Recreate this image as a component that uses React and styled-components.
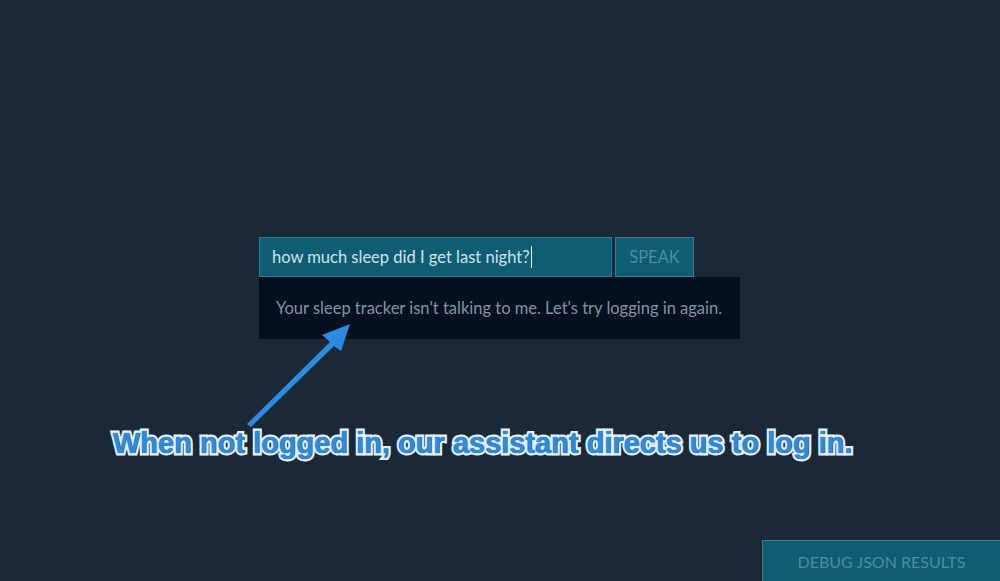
import React from "react";
import styled, { createGlobalStyle } from "styled-components";

const GlobalStyle = createGlobalStyle`
  html, body {
    margin: 0;
    padding: 0;
    background: #1b2838;
    height: 100%;
    overflow: hidden;
  }
  #root {
    height: 100%;
  }
`;

const App = () => {
  return (
    <Page>
      <GlobalStyle />
      <Assistant>
        <AskRow>
          <Question>
            how much sleep did I get last night?<Caret />
          </Question>
          <SpeakButton>SPEAK</SpeakButton>
        </AskRow>
        <Reply>Your sleep tracker isn't talking to me. Let's try logging in again.</Reply>
      </Assistant>
      <Arrow width="120" height="110" viewBox="0 0 120 110">
        <path d="M3 104 L86 22 L78 15 L106 4 L97 31 L90 26 L7 107 Z" fill="#2a8be0" />
      </Arrow>
      <Note>When not logged in, our assistant directs us to log in.</Note>
      <DebugButton>DEBUG JSON RESULTS</DebugButton>
    </Page>
  );
};
export default App;

const Page = styled.div`
  position: relative;
  height: 581px;
  box-sizing: border-box;
  padding: 237px 0 0 259px;
  font-family: Lato, "Open Sans", sans-serif;
`;

const Assistant = styled.div`
  display: flex;
  flex-direction: column;
  width: 481px;
`;

const AskRow = styled.div`
  display: flex;
  gap: 3px;
`;

const Question = styled.div`
  width: 353px;
  height: 40px;
  box-sizing: border-box;
  display: flex;
  align-items: center;
  padding: 0 12px;
  background: #0f5d72;
  border: 1px solid #2e7c90;
  color: #cfe3e8;
  font-size: 16.5px;
`;

const Caret = styled.span`
  display: inline-block;
  width: 1px;
  height: 22px;
  margin-left: 1px;
  background: #e6f2f5;
`;

const SpeakButton = styled.div`
  width: 79px;
  height: 40px;
  box-sizing: border-box;
  display: flex;
  align-items: center;
  justify-content: center;
  background: #0f5d72;
  border: 1.5px solid #3b7e93;
  color: #4b8ea2;
  font-size: 16.5px;
`;

const Reply = styled.div`
  height: 62px;
  box-sizing: border-box;
  display: flex;
  align-items: center;
  padding: 0 17px;
  background: #050f1f;
  color: #7f95a4;
  font-size: 16.5px;
`;

const Arrow = styled.svg`
  position: absolute;
  left: 244px;
  top: 320px;
`;

const Note = styled.div`
  position: absolute;
  left: 113px;
  top: 427px;
  font-family: "Liberation Sans", Arial, sans-serif;
  font-weight: 700;
  font-size: 29px;
  color: #2a8be0;
  -webkit-text-stroke: 5px #e4f4ff;
  paint-order: stroke fill;
  text-shadow: 0 0 1px #0d1a26;
  white-space: nowrap;
`;

const DebugButton = styled.div`
  position: absolute;
  right: 0;
  bottom: 0;
  width: 238px;
  height: 41px;
  box-sizing: border-box;
  display: flex;
  align-items: center;
  justify-content: center;
  background: #0f5d72;
  border: 1.5px solid #3a7f94;
  border-right: none;
  border-bottom: none;
  color: #4b8ea2;
  font-size: 16px;
`;
